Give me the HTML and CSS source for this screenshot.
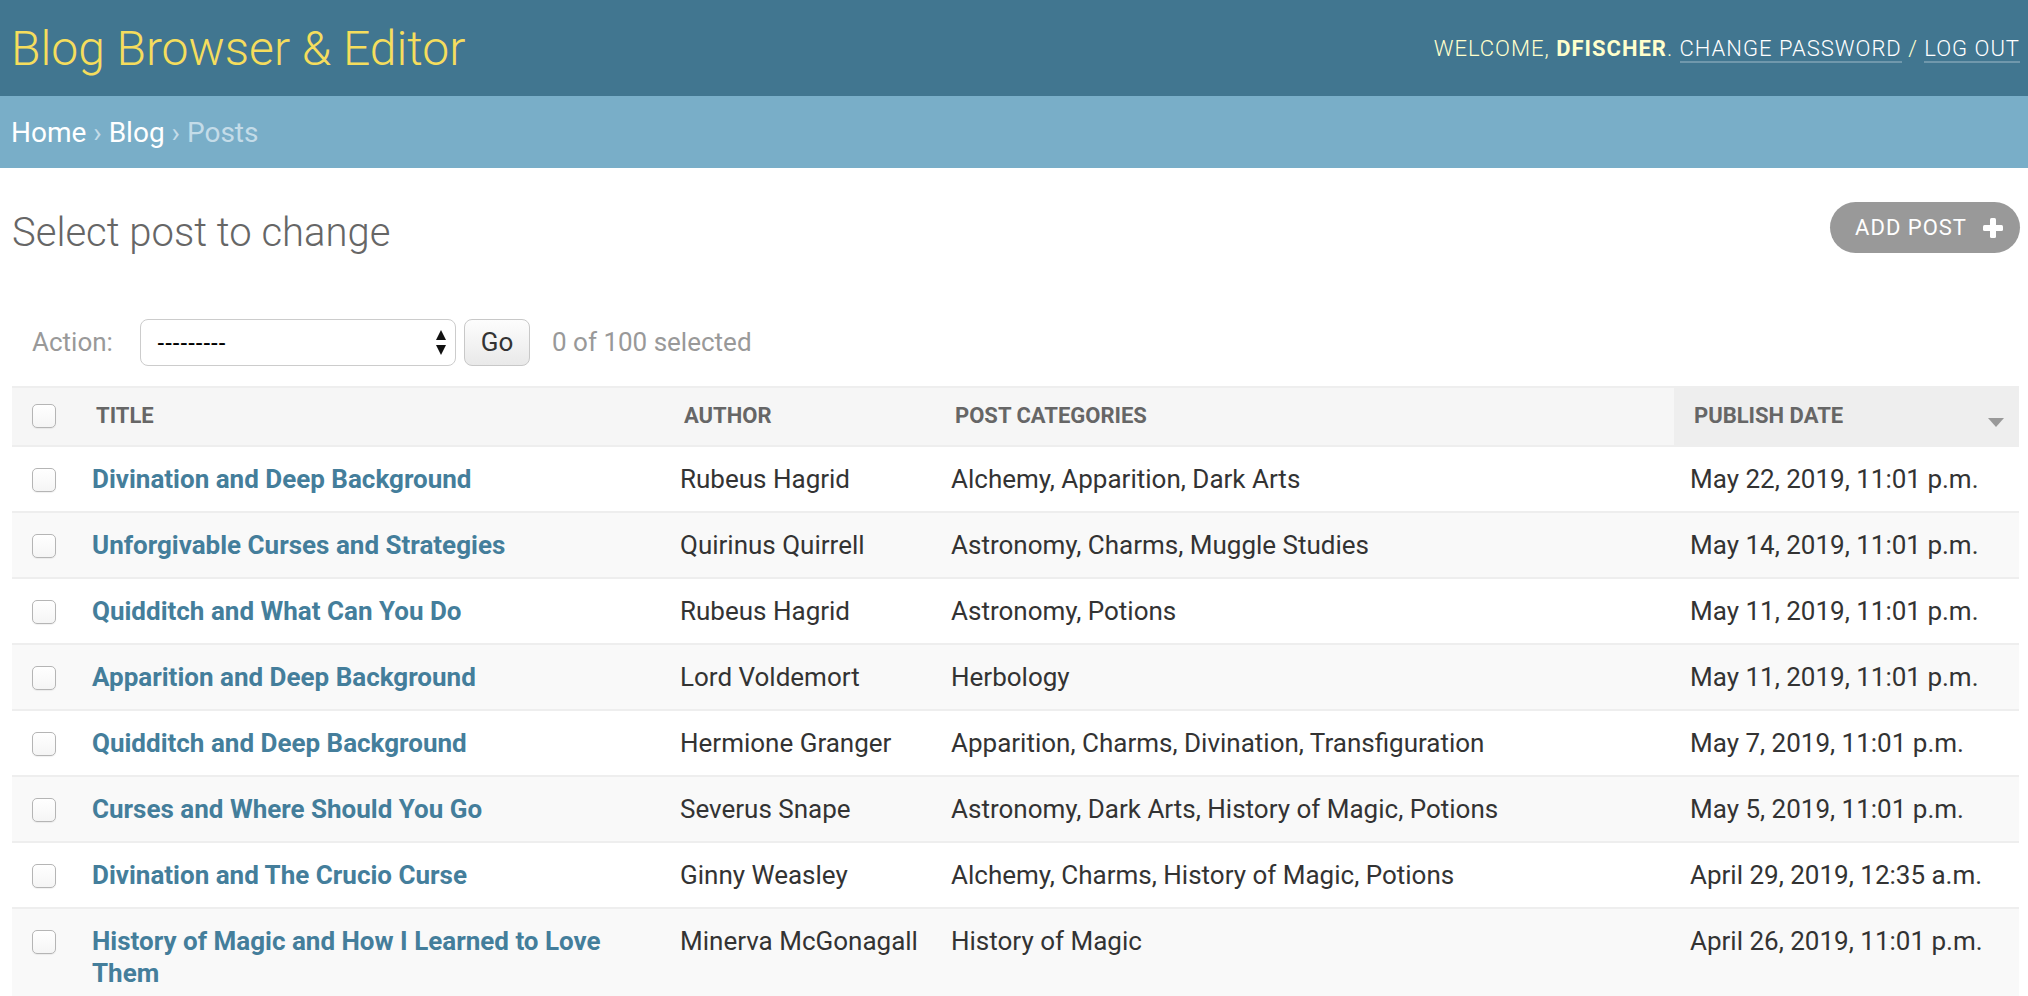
FILE: index.html
```html
<!DOCTYPE html>
<html lang="en">
<head>
<meta charset="utf-8">
<title>Select post to change | Blog Browser &amp; Editor</title>
<link rel="stylesheet" href="styles.css">
</head>
<body>
<header class="header">
  <h1 class="branding">Blog Browser &amp; Editor</h1>
  <div class="user-tools">Welcome, <strong>dfischer</strong>. <a href="#">Change password</a> / <a href="#">Log out</a></div>
</header>
<nav class="breadcrumbs"><a href="#">Home</a>&nbsp;›&nbsp;<a href="#">Blog</a>&nbsp;›&nbsp;Posts</nav>
<main class="content">
  <div class="page-head">
    <h1 class="page-title">Select post to change</h1>
    <a class="addlink" href="#">Add post
      <svg class="plus" width="20" height="20" viewBox="0 0 20 20"><rect x="7" y="0" width="6" height="20" rx="1.5" fill="#fff"/><rect x="0" y="7" width="20" height="6" rx="1.5" fill="#fff"/></svg>
    </a>
  </div>
  <div class="actions">
    <label class="action-label">Action:</label>
    <div class="select-wrap">
      <select class="action-select"><option>---------</option></select>
      <svg class="select-arrows" width="10" height="25" viewBox="0 0 10 25"><polygon points="0,10 5,0 10,10" fill="#111"/><polygon points="0,15 10,15 5,25" fill="#111"/></svg>
    </div>
    <button class="go-btn" type="button">Go</button>
    <span class="action-counter">0 of 100 selected</span>
  </div>
  <table class="result-list">
    <colgroup>
      <col class="c-check"><col class="c-title"><col class="c-author"><col class="c-cats"><col class="c-date">
    </colgroup>
    <thead>
      <tr>
        <th class="check-col"><input class="cb" type="checkbox"></th>
        <th>Title</th>
        <th>Author</th>
        <th>Post categories</th>
        <th class="sorted">Publish date<svg class="sort-arrow" width="16" height="9" viewBox="0 0 16 9"><polygon points="0,0 16,0 8,9" fill="#999"/></svg></th>
      </tr>
    </thead>
    <tbody>
      <tr><td class="check-col"><input class="cb" type="checkbox"></td><td><a class="title-link" href="#">Divination and Deep Background</a></td><td class="author">Rubeus Hagrid</td><td>Alchemy, Apparition, Dark Arts</td><td>May 22, 2019, 11:01 p.m.</td></tr>
      <tr><td class="check-col"><input class="cb" type="checkbox"></td><td><a class="title-link" href="#">Unforgivable Curses and Strategies</a></td><td class="author">Quirinus Quirrell</td><td>Astronomy, Charms, Muggle Studies</td><td>May 14, 2019, 11:01 p.m.</td></tr>
      <tr><td class="check-col"><input class="cb" type="checkbox"></td><td><a class="title-link" href="#">Quidditch and What Can You Do</a></td><td class="author">Rubeus Hagrid</td><td>Astronomy, Potions</td><td>May 11, 2019, 11:01 p.m.</td></tr>
      <tr><td class="check-col"><input class="cb" type="checkbox"></td><td><a class="title-link" href="#">Apparition and Deep Background</a></td><td class="author">Lord Voldemort</td><td>Herbology</td><td>May 11, 2019, 11:01 p.m.</td></tr>
      <tr><td class="check-col"><input class="cb" type="checkbox"></td><td><a class="title-link" href="#">Quidditch and Deep Background</a></td><td class="author">Hermione Granger</td><td>Apparition, Charms, Divination, Transfiguration</td><td>May 7, 2019, 11:01 p.m.</td></tr>
      <tr><td class="check-col"><input class="cb" type="checkbox"></td><td><a class="title-link" href="#">Curses and Where Should You Go</a></td><td class="author">Severus Snape</td><td>Astronomy, Dark Arts, History of Magic, Potions</td><td>May 5, 2019, 11:01 p.m.</td></tr>
      <tr><td class="check-col"><input class="cb" type="checkbox"></td><td><a class="title-link" href="#">Divination and The Crucio Curse</a></td><td class="author">Ginny Weasley</td><td>Alchemy, Charms, History of Magic, Potions</td><td>April 29, 2019, 12:35 a.m.</td></tr>
      <tr><td class="check-col"><input class="cb" type="checkbox"></td><td><a class="title-link" href="#">History of Magic and How I Learned to Love Them</a></td><td class="author">Minerva McGonagall</td><td>History of Magic</td><td>April 26, 2019, 11:01 p.m.</td></tr>
    </tbody>
  </table>
</main>
</body>
</html>
```

FILE: styles.css
```css
* { box-sizing: border-box; }

body {
  margin: 0;
  font-family: Roboto, "Liberation Sans", sans-serif;
  color: #333;
  background: #fff;
}

.header {
  display: flex;
  justify-content: space-between;
  align-items: center;
  height: 96px;
  padding: 0 8px 0 11px;
  background: #417690;
}

.branding {
  margin: 0;
  font-size: 48px;
  font-weight: 300;
  color: #f5dd5d;
}

.user-tools {
  font-size: 22px;
  font-weight: 300;
  letter-spacing: 1px;
  text-transform: uppercase;
  color: #ffc;
}

.user-tools strong { font-weight: 700; }

.user-tools a {
  color: #fff;
  text-decoration: none;
  border-bottom: 2px solid rgba(255, 255, 255, 0.25);
}

.breadcrumbs {
  display: flex;
  align-items: center;
  height: 72px;
  padding: 0 11px;
  background: #79aec8;
  font-size: 28px;
  color: #c4dce8;
}

.breadcrumbs a { color: #fff; text-decoration: none; }

.content { padding: 34px 9px 0 12px; }

.page-head {
  display: flex;
  justify-content: space-between;
  align-items: flex-start;
}

.page-title {
  margin: 7px 0 0;
  font-size: 40px;
  line-height: 48px;
  font-weight: 300;
  color: #666;
}

.addlink {
  display: flex;
  align-items: center;
  height: 51px;
  padding: 0 17px 0 25px;
  margin-right: -1px;
  border-radius: 26px;
  background: #999;
  color: #fff;
  font-size: 22px;
  letter-spacing: 1px;
  text-transform: uppercase;
  text-decoration: none;
}

.plus { margin-left: 16px; }

.actions {
  display: flex;
  align-items: center;
  height: 88px;
  margin-top: 41px;
  padding: 0 20px;
  font-size: 26px;
  color: #999;
}

.action-label { width: 108px; }

.select-wrap {
  position: relative;
  width: 316px;
  height: 47px;
}

.action-select {
  appearance: none;
  -webkit-appearance: none;
  width: 100%;
  height: 100%;
  margin: 0;
  padding: 0 16px;
  border: 1px solid #ccc;
  border-radius: 8px;
  background: #fff;
  font-family: "Liberation Sans", sans-serif;
  font-size: 23px;
  color: #000;
}

.select-arrows {
  position: absolute;
  right: 10px;
  top: 11px;
  pointer-events: none;
}

.go-btn {
  width: 66px;
  height: 47px;
  margin-left: 8px;
  padding: 0;
  border: 1px solid #c8c8c8;
  border-radius: 8px;
  background: linear-gradient(#fdfdfd, #e9e9e9);
  font-family: Roboto, sans-serif;
  font-size: 26px;
  color: #333;
}

.action-counter { margin-left: 22px; }

.result-list {
  width: 100%;
  border-collapse: collapse;
  table-layout: fixed;
}

.c-check { width: 64px; }
.c-title { width: 588px; }
.c-author { width: 271px; }
.c-cats { width: 739px; }
.c-date { width: 345px; }

.result-list th,
.result-list td {
  padding: 16px;
  font-size: 26px;
  line-height: 32px;
  text-align: left;
  vertical-align: top;
  border-bottom: 2px solid #eee;
}

.result-list thead th {
  padding: 12px 20px 13px;
  border-top: 2px solid #eee;
  background: #f6f6f6;
  font-size: 22px;
  font-weight: 700;
  color: #666;
  text-transform: uppercase;
  white-space: nowrap;
}

.result-list thead th.sorted { background: #eee; }

.sort-arrow {
  float: right;
  margin: 18px -5px 0 0;
}

.result-list .check-col,
.result-list thead th.check-col {
  padding-left: 0;
  padding-right: 0;
}

.result-list td.author { white-space: nowrap; }

.cb {
  appearance: none;
  -webkit-appearance: none;
  display: block;
  width: 24px;
  height: 24px;
  margin: 4px auto 0;
  border: 1px solid #b5b5b5;
  border-radius: 5px;
  background: linear-gradient(#fff, #f5f5f5);
  box-shadow: 0 1px 1px rgba(0, 0, 0, 0.06);
}

tbody .cb { margin-top: 5px; }

.result-list tbody tr:nth-child(even) td { background: #f9f9f9; }

.title-link {
  font-weight: 700;
  color: #447e9b;
  text-decoration: none;
}
```
